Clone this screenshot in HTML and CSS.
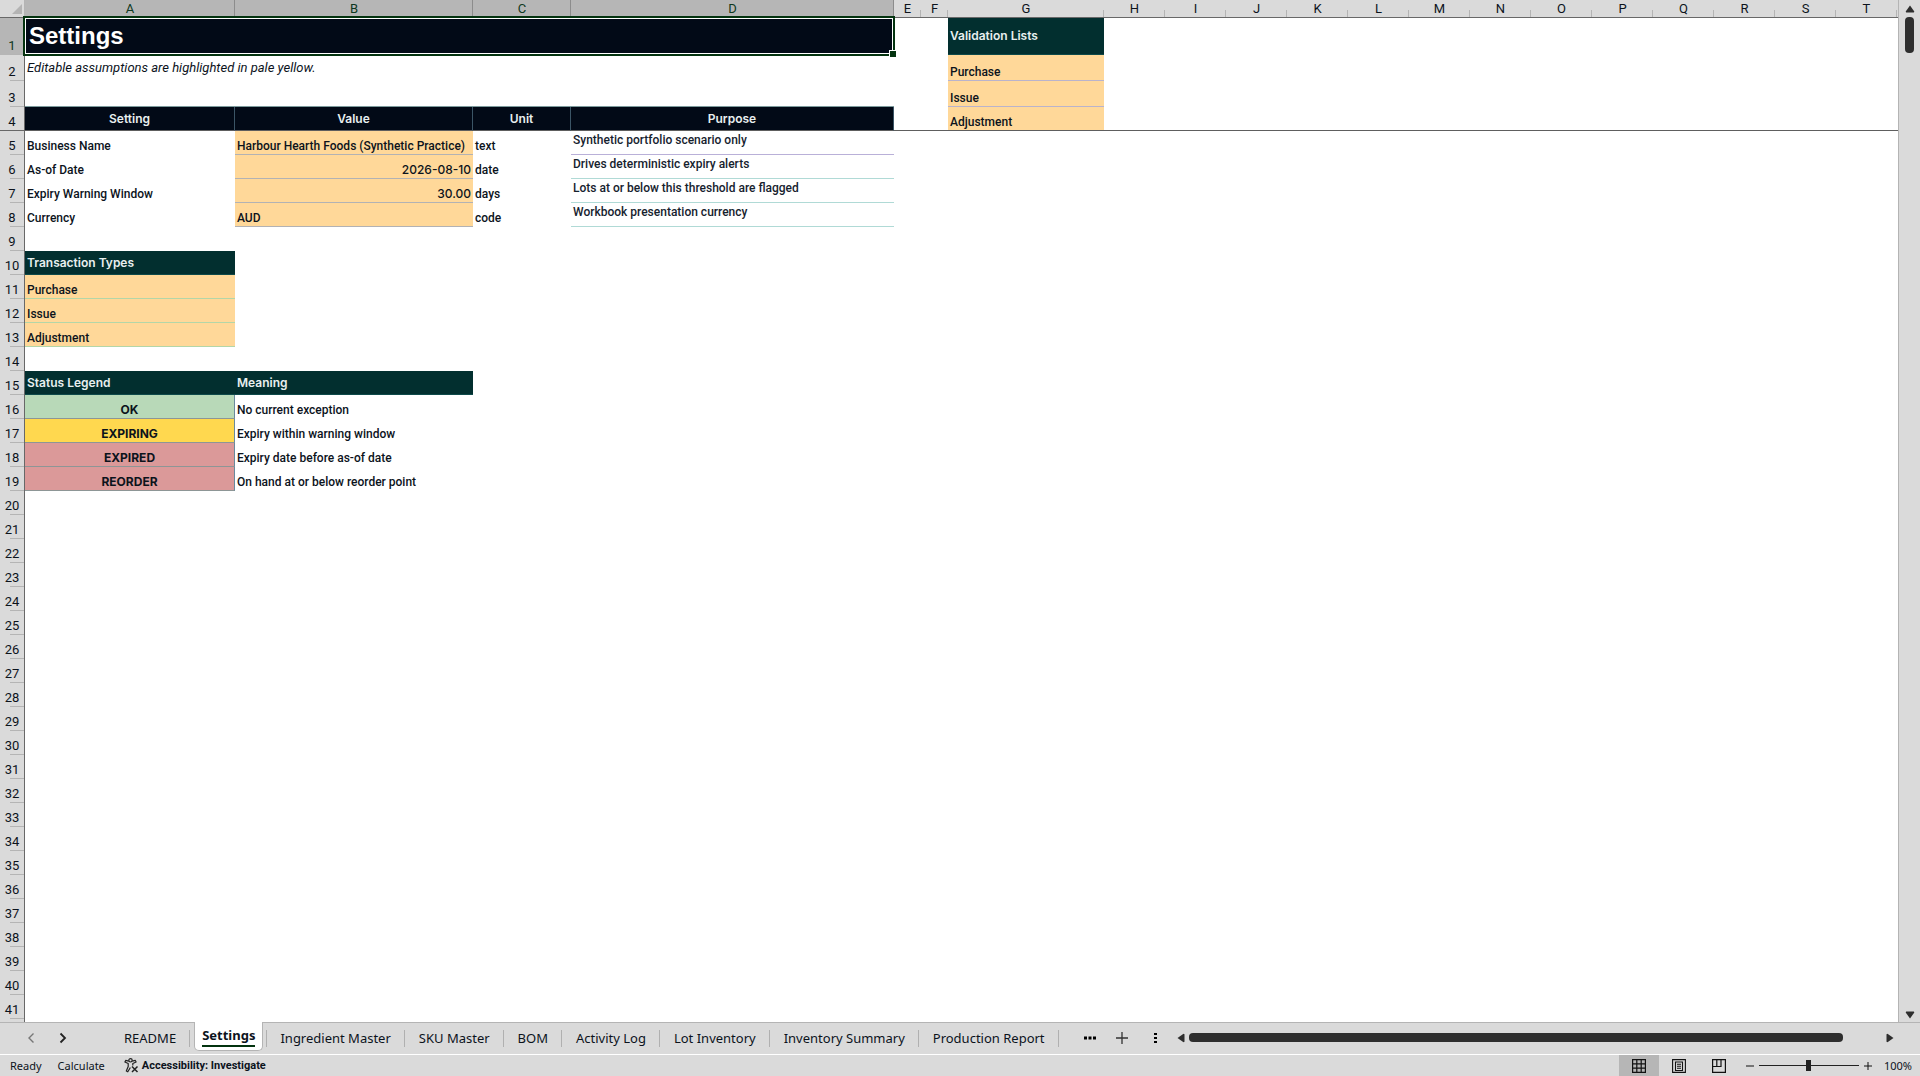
FILE: index.html
```html
<!DOCTYPE html>
<html lang="en">
<head>
<meta charset="utf-8">
<title>Settings</title>
<link rel="stylesheet" href="styles.css">
</head>
<body>
<main class="workspace">
  <div class="grid">
    <table class="sheet">
      <colgroup>
        <col class="w-head"><col class="w-a"><col class="w-b"><col class="w-c"><col class="w-d"><col class="w-e"><col class="w-f"><col class="w-g">
        <col class="w-std" span="13"><col>
      </colgroup>
      <thead>
        <tr>
          <th class="corner"><svg width="10" height="10" viewBox="0 0 10 10" aria-hidden="true"><path d="M10 0v10H0z" fill="#b4b4b4"/></svg></th>
          <th class="sel">A</th><th class="sel">B</th><th class="sel">C</th><th class="sel">D</th>
          <th>E</th><th>F</th><th>G</th><th>H</th><th>I</th><th>J</th><th>K</th><th>L</th><th>M</th><th>N</th><th>O</th><th>P</th><th>Q</th><th>R</th><th>S</th><th>T</th><th class="rest"></th>
        </tr>
      </thead>
      <tbody>
        <tr class="r1"><th class="sel">1</th><td class="title" colspan="4">Settings<span class="selection"></span></td><td colspan="2"></td><td class="section">Validation Lists</td></tr>
        <tr class="r2"><th>2</th><td class="note" colspan="4">Editable assumptions are highlighted in pale yellow.</td><td colspan="2"></td><td class="input lilac">Purchase</td></tr>
        <tr class="r2"><th>3</th><td colspan="4"></td><td colspan="2"></td><td class="input lilac">Issue</td></tr>
        <tr class="frozen"><th>4</th><td class="heading">Setting</td><td class="heading">Value</td><td class="heading">Unit</td><td class="heading">Purpose</td><td colspan="2"></td><td class="input">Adjustment</td><td colspan="14"></td></tr>
        <tr><th>5</th><td>Business Name</td><td class="input">Harbour Hearth Foods (Synthetic Practice)</td><td>text</td><td class="purpose violet">Synthetic portfolio scenario only</td></tr>
        <tr><th>6</th><td>As-of Date</td><td class="input number">2026-08-10</td><td>date</td><td class="purpose">Drives deterministic expiry alerts</td></tr>
        <tr><th>7</th><td>Expiry Warning Window</td><td class="input number">30.00</td><td>days</td><td class="purpose">Lots at or below this threshold are flagged</td></tr>
        <tr><th>8</th><td>Currency</td><td class="input">AUD</td><td>code</td><td class="purpose">Workbook presentation currency</td></tr>
        <tr><th>9</th></tr>
        <tr><th>10</th><td class="section">Transaction Types</td></tr>
        <tr><th>11</th><td class="input mint">Purchase</td></tr>
        <tr><th>12</th><td class="input mint">Issue</td></tr>
        <tr><th>13</th><td class="input mint">Adjustment</td></tr>
        <tr><th>14</th></tr>
        <tr><th>15</th><td class="section">Status Legend</td><td class="section">Meaning</td></tr>
        <tr><th>16</th><td class="status ok">OK</td><td>No current exception</td></tr>
        <tr><th>17</th><td class="status expiring">EXPIRING</td><td>Expiry within warning window</td></tr>
        <tr><th>18</th><td class="status alert">EXPIRED</td><td>Expiry date before as-of date</td></tr>
        <tr><th>19</th><td class="status alert">REORDER</td><td>On hand at or below reorder point</td></tr>
        <tr><th>20</th></tr><tr><th>21</th></tr><tr><th>22</th></tr><tr><th>23</th></tr>
        <tr><th>24</th></tr><tr><th>25</th></tr><tr><th>26</th></tr><tr><th>27</th></tr>
        <tr><th>28</th></tr><tr><th>29</th></tr><tr><th>30</th></tr><tr><th>31</th></tr>
        <tr><th>32</th></tr><tr><th>33</th></tr><tr><th>34</th></tr><tr><th>35</th></tr>
        <tr><th>36</th></tr><tr><th>37</th></tr><tr><th>38</th></tr><tr><th>39</th></tr>
        <tr><th>40</th></tr><tr><th>41</th></tr><tr><th></th></tr>
      </tbody>
    </table>
  </div>
  <div class="vscroll">
    <button aria-label="Scroll up"><svg width="10" height="8" viewBox="0 0 10 8"><path d="M5 .5 9.3 6.5 8.8 7.5H1.200L.7 6.500z"/></svg></button>
    <div class="vtrack"><div class="vthumb"></div></div>
    <button aria-label="Scroll down"><svg width="10" height="8" viewBox="0 0 10 8"><path d="M5 7.500 9.300 1.500 8.800.5H1.200L.7 1.500z"/></svg></button>
  </div>
</main>
<nav class="tabstrip" aria-label="Sheets">
  <div class="arrows">
    <button aria-label="Previous sheet"><svg width="8" height="12" viewBox="0 0 8 12"><path d="M6.500 1.500 2 6l4.500 4.500" fill="none" stroke="#777" stroke-width="1.400"/></svg></button>
    <button aria-label="Next sheet"><svg width="8" height="12" viewBox="0 0 8 12"><path d="M1.500 1.500 6 6l-4.500 4.500" fill="none" stroke="#222" stroke-width="1.800"/></svg></button>
  </div>
  <button class="tab">README</button>
  <button class="tab active"><span>Settings</span></button>
  <button class="tab">Ingredient Master</button>
  <button class="tab">SKU Master</button>
  <button class="tab">BOM</button>
  <button class="tab">Activity Log</button>
  <button class="tab">Lot Inventory</button>
  <button class="tab">Inventory Summary</button>
  <button class="tab">Production Report</button>
  <div class="tools">
    <button aria-label="All sheets"><svg width="12" height="4" viewBox="0 0 12 4"><path d="M0 .5h3v3H0zM4.500.5h3v3h-3zM9 .5h3v3H9z"/></svg></button>
    <button aria-label="New sheet"><svg width="12" height="12" viewBox="0 0 12 12"><path d="M6 0v12M0 6h12" stroke="#333" stroke-width="1.300"/></svg></button>
    <button class="grip" aria-label="Resize tabs"><svg width="3" height="12" viewBox="0 0 3 12"><path d="M0 1h3v2H0zM0 5h3v2H0zM0 9h3v2H0z"/></svg></button>
  </div>
  <div class="hscroll">
    <button aria-label="Scroll left"><svg width="8" height="10" viewBox="0 0 8 10"><path d="M.5 5 6.500.7l1 .5v7.600l-1 .5z"/></svg></button>
    <div class="hthumb"></div>
    <button aria-label="Scroll right"><svg width="8" height="10" viewBox="0 0 8 10"><path d="M7.500 5 1.500.7l-1 .5v7.600l1 .5z"/></svg></button>
  </div>
</nav>
<footer class="statusbar">
  <span>Ready</span>
  <span>Calculate</span>
  <button class="access"><svg width="15" height="15" viewBox="0 0 15 15" fill="none" stroke="#222" stroke-width="1.200" stroke-linejoin="round"><circle cx="6.500" cy="2.300" r="1.700"/><path d="M4.800 3.200 1.700 2.400.9 4l3.300 1.500v3L2.300 13l1.500.8L6.400 9.500M8.200 3.200l3.100-.8.8 1.600-3.300 1.500v2"/><path d="M8 8.500l5.500 5.500M13.500 8.500 8 14" stroke-width="1.500"/></svg>Accessibility: Investigate</button>
  <div class="views">
    <button class="on" aria-label="Normal view"><svg width="14" height="14" viewBox="0 0 14 14"><path d="M.6.6h12.800v12.800H.6zM4.800.6v12.800M9.200.6v12.800M.6 4.800h12.800M.6 9.200h12.800" fill="none" stroke="#111" stroke-width="1.200"/></svg></button>
    <button aria-label="Page layout"><svg width="14" height="14" viewBox="0 0 14 14"><path d="M.6.6h12.800v12.800H.6zM3.500 3h7v8.500h-7zM5 5.200h4M5 7.200h4M5 9.200h4" fill="none" stroke="#111" stroke-width="1.100"/></svg></button>
    <button aria-label="Page break preview"><svg width="14" height="14" viewBox="0 0 14 14"><path d="M.6.6h12.800v12.800H.6zM.6 7.500h8.400V.6M4.800.6v6.900" fill="none" stroke="#111" stroke-width="1.200"/></svg></button>
  </div>
  <div class="zoom">
    <button aria-label="Zoom out"><svg width="8" height="8" viewBox="0 0 8 8"><path d="M0 4h8" stroke="#111"/></svg></button>
    <input type="range" min="0" max="100" value="50" aria-label="Zoom">
    <button aria-label="Zoom in"><svg width="8" height="8" viewBox="0 0 8 8"><path d="M0 4h8M4 0v8" stroke="#111"/></svg></button>
    <button class="percent">100%</button>
  </div>
</footer>
</body>
</html>
```
FILE: styles.css
```css
* { box-sizing: border-box; }

body {
  margin: 0;
  height: 100vh;
  display: flex;
  flex-direction: column;
  background: #dadada;
  color: #0c131c;
  font-family: Roboto, "Liberation Sans", sans-serif;
  font-size: 12px;
  overflow: hidden;
}

button {
  margin: 0;
  padding: 0;
  border: 0;
  background: none;
  font: inherit;
  color: inherit;
  display: flex;
  align-items: center;
  justify-content: center;
}

button svg { display: block; flex: none; }

/* Grid */
.workspace { flex: 1; min-height: 0; display: flex; }

.grid {
  flex: 1;
  min-width: 0;
  overflow: hidden;
  background: #fff;
  border-right: 1px solid #b4b4b4;
}

.sheet {
  width: 100%;
  table-layout: fixed;
  border-collapse: separate;
  border-spacing: 0;
}

.w-head { width: 25px; }
.w-a { width: 210px; }
.w-b { width: 238px; }
.w-c { width: 98px; }
.w-d { width: 323px; }
.w-e { width: 27px; }
.w-f { width: 27px; }
.w-g { width: 156px; }
.w-std { width: 61px; }

.sheet th {
  padding: 0;
  font-size: 13px;
  font-weight: 400;
  line-height: 18px;
  background-color: #dadada;
  background-repeat: no-repeat;
}

thead th {
  height: 18px;
  border-bottom: 1px solid #686868;
  background-image: linear-gradient(#b4b4b4, #b4b4b4);
  background-size: 1px 7px;
  background-position: right bottom;
}

.sheet thead th { line-height: 17px; }

.sheet thead th.sel {
  background-color: #b6b6b6;
  background-image: linear-gradient(#8c8c8c, #8c8c8c);
  background-size: 1px 17px;
  color: #0d3820;
}

.sheet thead th.rest { background-image: none; }

.sheet thead th.corner {
  border-right: 1px solid #b4b4b4;
  background-image: none;
}

.corner svg { display: block; margin: 4px 0 3px 12px; }

tbody tr { height: 24px; }
tbody tr.r1 { height: 37px; }
tbody tr.r2 { height: 26px; }

tbody th {
  border-right: 1px solid #686868;
  vertical-align: bottom;
  background-image: linear-gradient(#b4b4b4, #b4b4b4);
  background-size: 14px 1px;
  background-position: right bottom;
}

.sheet tbody th.sel { background-color: #b6b6b6; color: #0d3820; }

.sheet td {
  padding: 0 2px;
  border-bottom: 1px solid transparent;
  line-height: 16px;
  font-weight: 500;
  vertical-align: bottom;
  white-space: nowrap;
}

.sheet td.title {
  position: relative;
  padding: 0 4px;
  background: #020a17;
  color: #fff;
  font: bold 24px/30px "Liberation Sans", Arial, sans-serif;
  vertical-align: middle;
}

.selection {
  position: absolute;
  inset: -2px -1px -2px -2px;
  border: 2px solid #03330f;
  box-shadow: inset 0 0 0 1px #fff;
}

.selection::after {
  content: "";
  position: absolute;
  right: -3px;
  bottom: -3px;
  width: 6px;
  height: 6px;
  background: #03330f;
  border-left: 1px solid #fff;
  border-top: 1px solid #fff;
}

.sheet td.note {
  font-size: 13px;
  font-style: italic;
  font-weight: 400;
  vertical-align: middle;
}

.sheet td.heading,
.sheet td.section {
  font-family: Inter, sans-serif;
  font-weight: 600;
  color: #e8efef;
  vertical-align: middle;
}

.sheet td.heading {
  background: #020a17;
  border-right: 1px solid #3b5566;
  text-align: center;
  box-shadow: 0 -1px #7c9a9c;
}

.sheet td.section { background: #022f2f; border-bottom-color: #0e4a4a; }

.sheet td.input { background: #ffd899; border-bottom-color: #b2b2b4; }
.sheet td.lilac { border-bottom-color: #b9b3cc; }
.sheet td.mint { border-bottom-color: #b3d6a8; }

.sheet td.number { text-align: right; font-family: Inter, sans-serif; }

.sheet td.purpose {
  padding-top: 1px;
  vertical-align: top;
  color: #16222e;
  border-bottom-color: #b0dad6;
}

.sheet td.violet { border-bottom-color: #b9b0d8; }

.sheet .frozen td { border-bottom-color: #5e5e5e; }
.sheet .frozen th {
  background-image: linear-gradient(#686868, #686868);
  background-size: 25px 1px;
}

.sheet td.status {
  font-family: Inter, sans-serif;
  font-weight: 700;
  text-align: center;
  border-right: 1px solid #6a8a9c;
  border-bottom-color: #8d9696;
}

.ok { background: #b8d9b8; }
.expiring { background: #ffd84f; }
.alert { background: #db9999; }

/* Vertical scrollbar */
.vscroll {
  width: 21px;
  padding: 5px 0 3px;
  display: flex;
  flex-direction: column;
  align-items: center;
  fill: #2e2e2e;
}

.vtrack { flex: 1; padding-top: 4px; }
.vthumb { width: 9px; height: 36px; border-radius: 4px; background: #2e2e2e; }

/* Sheet tabs */
.tabstrip {
  height: 32px;
  display: flex;
  border-top: 1px solid #b4b4b4;
  font: 13px/18px "Noto Sans", sans-serif;
}

.tabstrip button { padding-bottom: 2px; }

.arrows { width: 110px; padding-left: 27px; display: flex; gap: 24px; }

.tabstrip .tab {
  position: relative;
  padding: 0 14px 2px;
  white-space: nowrap;
}

.tab::after {
  content: "";
  position: absolute;
  right: 0;
  top: 7px;
  height: 17px;
  width: 1px;
  background: #b0b0b0;
}

.tabstrip .tab.active {
  height: 29px;
  margin: -1px 3px 0 4px;
  padding: 0 7px;
  background: #fff;
  border: 1px solid #b4b4b4;
  border-top: 0;
  border-radius: 0 0 5px 5px;
  font-weight: 700;
}

.tab.active::after { right: -5px; top: 8px; }
.tab.active span { border-bottom: 2px solid #03330f; line-height: 20px; }

.tools { display: flex; width: 102px; padding-left: 25px; gap: 20px; }
.tools .grip { margin-left: 6px; }

.hscroll {
  flex: 1;
  padding: 0 26px 0 16px;
  display: flex;
  align-items: center;
  gap: 4px;
  fill: #2e2e2e;
}

.tabstrip .hscroll { padding-bottom: 2px; }
.tabstrip .hscroll button { padding: 0; }

.hthumb {
  flex: 1;
  height: 9px;
  margin-right: 39px;
  border-radius: 4px;
  background: #2e2e2e;
}

/* Status bar */
.statusbar {
  height: 22px;
  padding: 0 8px 0 10px;
  border-top: 1px solid #fff;
  display: flex;
  align-items: center;
  gap: 16px;
  font: 11px/16px "Noto Sans", sans-serif;
}

.access { gap: 3px; margin-left: 3px; font-family: Roboto, sans-serif; font-weight: 700; }

.views { display: flex; align-self: stretch; margin-left: auto; }
.views button { width: 40px; }
.views .on { background: #b6b6b6; }

.zoom { display: flex; align-items: center; gap: 5px; margin-left: -9px; }
.zoom .percent { margin-left: 7px; }

input[type="range"] {
  width: 100px;
  height: 12px;
  margin: 0;
  appearance: none;
  background: linear-gradient(#222, #222) center / 100% 1px no-repeat;
}

input[type="range"]::-webkit-slider-thumb {
  appearance: none;
  width: 5px;
  height: 11px;
  background: #222;
}
```
